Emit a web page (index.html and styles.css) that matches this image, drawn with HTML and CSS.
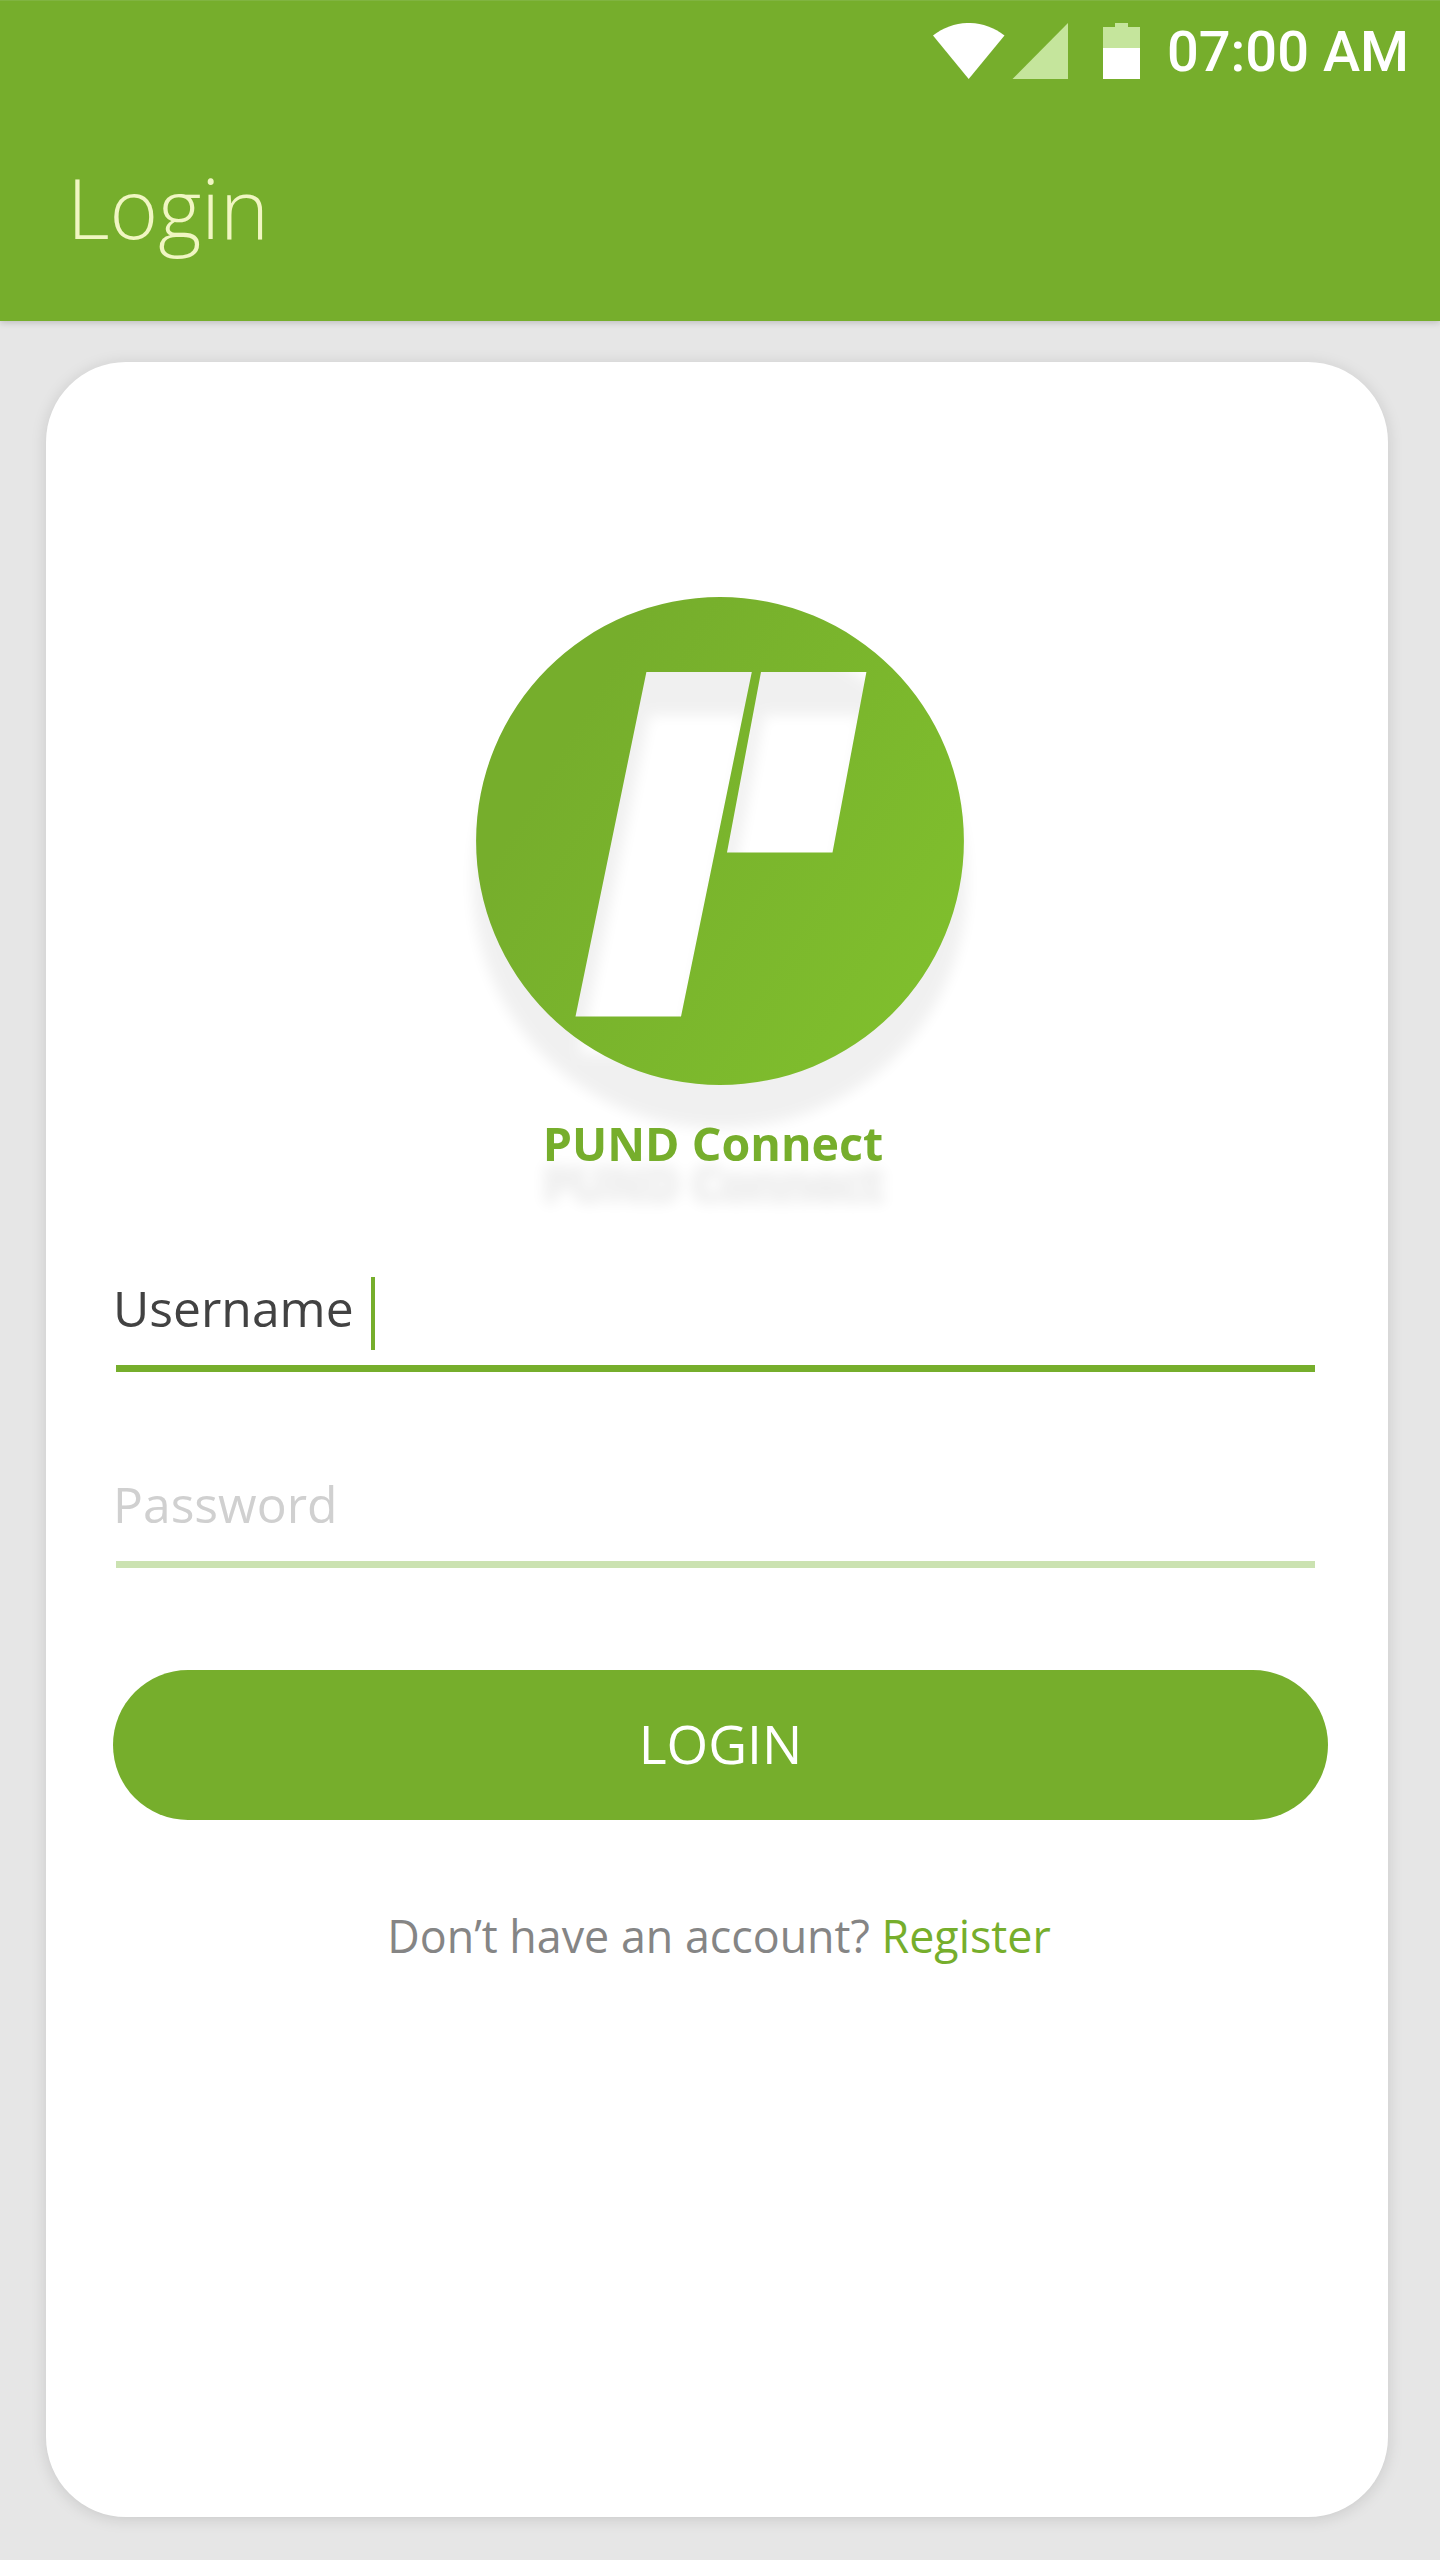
FILE: index.html
```html
<!DOCTYPE html>
<html lang="en">

<head>
    <meta charset="UTF-8">
    <meta name="viewport" content="width=device-width, initial-scale=1.0">
    <title>PUND Connect</title>
    <link rel="stylesheet" href="styles.css">
</head>

<body>
    <header class="header">
        <div class="statusBar">
            <!-- wifi, signal, battery -->
            <svg class="statusIcons" width="208" height="56" viewBox="0 0 208 56">
                <path fill="#fff" d="M0 12.500C21-4.200 50.500-4.200 71.500 12.500L35.700 56z" />
                <path fill="#c5e59c" d="M135 0V56H79.500z" />
                <path fill="#c5e59c" d="M182 0H195V4H207V25H170V4H182z" />
                <path fill="#fff" d="M170 25H207V56H170z" />
            </svg>
            <span class="clock">07:00 AM</span>
        </div>
        <h1 class="title">Login</h1>
    </header>

    <main class="card">
        <svg class="logo" width="488" height="488" viewBox="0 0 488 488">
            <defs>
                <linearGradient id="logoFill" x1="0.15" y1="0.35" x2="0.9" y2="0.8">
                    <stop offset="0" stop-color="#76ae2c" />
                    <stop offset="1" stop-color="#7fbe2d" />
                </linearGradient>
                <!-- drop shadow with a few px of spread, shared by the logo and the brand name -->
                <filter id="longShadow" x="-20%" y="-20%" width="140%" height="260%" color-interpolation-filters="sRGB">
                    <feMorphology in="SourceAlpha" operator="dilate" radius="3" />
                    <feGaussianBlur stdDeviation="7" />
                    <feOffset dy="40" />
                    <feComponentTransfer result="shadow">
                        <feFuncR type="linear" slope="0" />
                        <feFuncG type="linear" slope="0" />
                        <feFuncB type="linear" slope="0" />
                        <feFuncA type="linear" slope="0.06" />
                    </feComponentTransfer>
                    <feMerge>
                        <feMergeNode in="shadow" />
                        <feMergeNode in="SourceGraphic" />
                    </feMerge>
                </filter>
            </defs>
            <path fill="url(#logoFill)" fill-rule="evenodd" filter="url(#longShadow)" d="M244 0A244 244 0 0 1 244 488A244 244 0 0 1 244 0z
                M170.400 75L99.500 419.500H205L275.800 75z
                M285 75L251 255.500H356.500L390.400 75z" />
        </svg>
        <div class="brand">PUND Connect</div>

        <form class="loginForm">
            <div class="field active"><span class="fieldText">Username</span><span class="caret"></span></div>
            <div class="field"><span class="fieldText">Password</span></div>
            <button class="loginButton" type="button">LOGIN</button>
        </form>
        <p class="signup">Don’t have an account? <a class="registerLink">Register</a></p>
    </main>
</body>

</html>
```
FILE: styles.css
```css
body {
    margin: 0;
    height: 2560px;
    background-color: #e6e6e6;
    font-family: "Open Sans", sans-serif;
}

.header {
    box-sizing: border-box;
    height: 321px;
    border-top: 1px solid #80b441;
    background-color: #76ae2c;
    box-shadow: 0 2px 6px rgba(0, 0, 0, 0.16);
}

.statusBar {
    display: flex;
    justify-content: flex-end;
    align-items: center;
    gap: 26px;
    height: 100px;
    padding-right: 31px;
}

.clock {
    margin-top: 1px;
    color: white;
    font-family: Roboto, sans-serif;
    font-size: 56px;
    font-weight: 500;
}

.title {
    margin: 0;
    padding: 56px 0 0 67px;
    color: #f0f6c2;
    font-size: 83px;
    font-weight: 300;
    line-height: 100px;
}

.card {
    box-sizing: border-box;
    display: flex;
    flex-direction: column;
    align-items: center;
    width: 1342px;
    height: 2155px;
    margin: 41px 0 0 46px;
    padding-top: 234px;
    border-radius: 80px;
    background-color: white;
    box-shadow: 0 2px 16px rgba(0, 0, 0, 0.13);
}

.logo {
    margin: 1px 0 0 6px;
    overflow: visible;
}

.brand {
    margin: 26px 8px 0 0;
    color: #76ae2c;
    font-size: 46.6px;
    font-weight: bold;
    line-height: 64px;
    filter: url(#longShadow);
}

.loginForm {
    display: flex;
    flex-direction: column;
    width: 1215px;
    margin: 90px 0 0 7px;
}

.field {
    display: flex;
    width: 1199px;
    height: 84px;
    margin: 0 0 89px 3px;
    padding-bottom: 16px;
    border-bottom: 7px solid #cbe2b1;
    color: #d0d0d0;
    font-size: 49.8px;
    line-height: 86px;
}

.field.active {
    border-color: #76ae2c;
    color: #424242;
}

.fieldText {
    margin-left: -3px;
}

.caret {
    width: 4px;
    height: 73px;
    margin: 12px 0 0 17px;
    background-color: #76ae2c;
}

.loginButton {
    height: 150px;
    margin-top: 13px;
    padding: 0 0 3px;
    border: none;
    border-radius: 75px;
    background-color: #76ae2c;
    color: white;
    font-family: inherit;
    font-size: 53.5px;
}

.signup {
    margin: 84px 0 0 4px;
    color: #858585;
    font-size: 44.8px;
    line-height: 64px;
}

.registerLink {
    color: #76ae2c;
}
```
